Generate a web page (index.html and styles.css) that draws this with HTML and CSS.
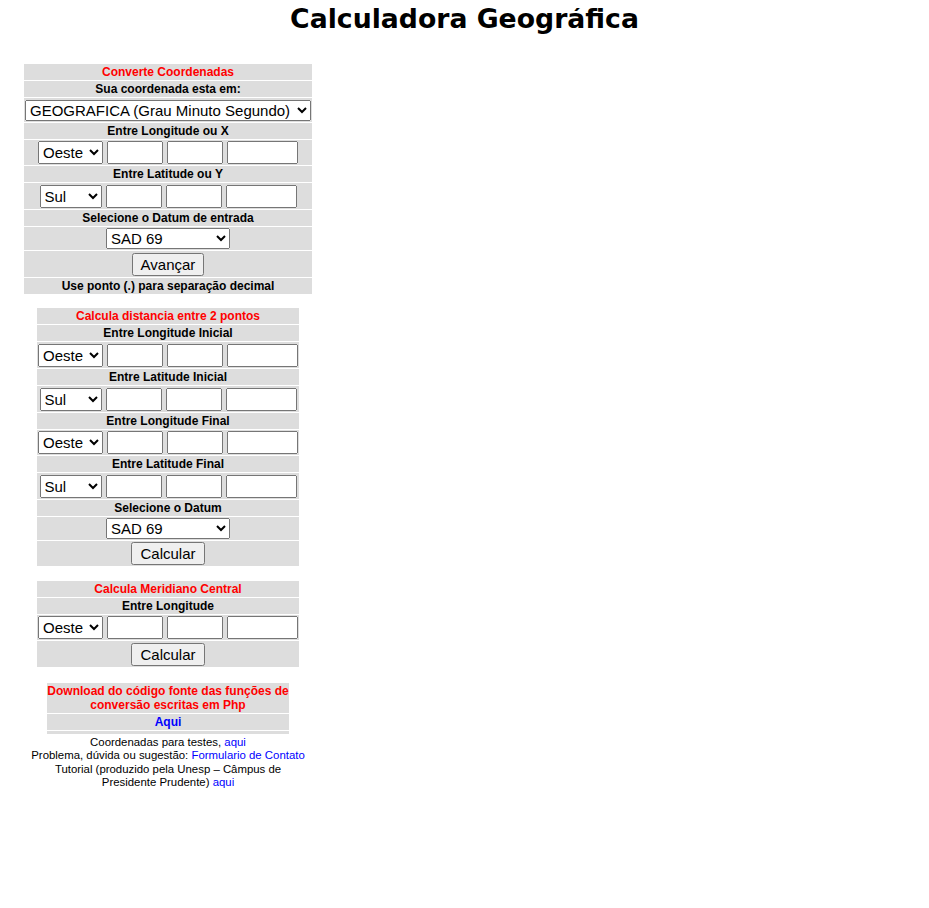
FILE: index.html
```html
<!DOCTYPE html>
<html lang="pt-BR">
<head>
<meta charset="utf-8">
<title>Calculadora Geográfica</title>
<link rel="stylesheet" href="styles.css">
</head>
<body>
<h1 class="title">Calculadora Geográfica</h1>
<div class="column">
  <form class="panel panel-wide">
    <div class="cell head">Converte Coordenadas</div>
    <div class="cell label">Sua coordenada esta em:</div>
    <div class="cell row row-select-tall">
      <select class="sel-system"><option>GEOGRAFICA (Grau Minuto Segundo)</option><option>UTM</option></select>
    </div>
    <div class="cell label">Entre Longitude ou X</div>
    <div class="cell row">
      <select class="sel-dir sel-ew"><option>Oeste</option><option>Leste</option></select>
      <input class="in-a" type="text"><input class="in-b" type="text"><input class="in-c" type="text">
    </div>
    <div class="cell label">Entre Latitude ou Y</div>
    <div class="cell row row-tall">
      <select class="sel-dir sel-ns"><option>Sul</option><option>Norte</option></select>
      <input class="in-a" type="text"><input class="in-b" type="text"><input class="in-c" type="text">
    </div>
    <div class="cell label">Selecione o Datum de entrada</div>
    <div class="cell row row-select">
      <select class="sel-datum"><option>SAD 69</option><option>WGS 84</option><option>Córrego Alegre</option></select>
    </div>
    <div class="cell row row-tall"><button type="button" class="btn">Avançar</button></div>
    <div class="cell label">Use ponto (.) para separação decimal</div>
  </form>

  <form class="panel panel-mid panel-dist">
    <div class="cell head">Calcula distancia entre 2 pontos</div>
    <div class="cell label">Entre Longitude Inicial</div>
    <div class="cell row row-tall">
      <select class="sel-dir sel-ew"><option>Oeste</option><option>Leste</option></select>
      <input class="in-a" type="text"><input class="in-b" type="text"><input class="in-c" type="text">
    </div>
    <div class="cell label">Entre Latitude Inicial</div>
    <div class="cell row row-tall">
      <select class="sel-dir sel-ns"><option>Sul</option><option>Norte</option></select>
      <input class="in-a" type="text"><input class="in-b" type="text"><input class="in-c" type="text">
    </div>
    <div class="cell label">Entre Longitude Final</div>
    <div class="cell row">
      <select class="sel-dir sel-ew"><option>Oeste</option><option>Leste</option></select>
      <input class="in-a" type="text"><input class="in-b" type="text"><input class="in-c" type="text">
    </div>
    <div class="cell label">Entre Latitude Final</div>
    <div class="cell row row-tall">
      <select class="sel-dir sel-ns"><option>Sul</option><option>Norte</option></select>
      <input class="in-a" type="text"><input class="in-b" type="text"><input class="in-c" type="text">
    </div>
    <div class="cell label">Selecione o Datum</div>
    <div class="cell row row-select">
      <select class="sel-datum"><option>SAD 69</option><option>WGS 84</option><option>Córrego Alegre</option></select>
    </div>
    <div class="cell row"><button type="button" class="btn">Calcular</button></div>
  </form>

  <form class="panel panel-mid panel-meridian">
    <div class="cell head">Calcula Meridiano Central</div>
    <div class="cell label">Entre Longitude</div>
    <div class="cell row">
      <select class="sel-dir sel-ew"><option>Oeste</option><option>Leste</option></select>
      <input class="in-a" type="text"><input class="in-b" type="text"><input class="in-c" type="text">
    </div>
    <div class="cell row row-tall"><button type="button" class="btn">Calcular</button></div>
  </form>

  <div class="panel panel-narrow">
    <div class="cell head">Download do código fonte das funções de<br>conversão escritas em Php</div>
    <div class="cell label"><a class="link" href="#">Aqui</a></div>
    <div class="cell spacer"></div>
  </div>

  <p class="footer">
    Coordenadas para testes, <a class="link" href="#">aqui</a><br>
    Problema, dúvida ou sugestão: <a class="link" href="#">Formulario de Contato</a><br>
    Tutorial (produzido pela Unesp – Câmpus de<br>
    Presidente Prudente) <a class="link" href="#">aqui</a>
  </p>
</div>
</body>
</html>
```

FILE: styles.css
```css
html {
  background: #fff;
}

body {
  margin: 8px;
  font-family: "Liberation Sans", Arial, sans-serif;
  color: #000;
}

.title {
  margin: 0;
  text-align: center;
  font-family: "DejaVu Sans", Verdana, sans-serif;
  font-weight: bold;
  font-size: 26.7px;
  line-height: 22px;
}

.column {
  width: 320px;
  display: flex;
  flex-direction: column;
  align-items: center;
}

.panel {
  display: flex;
  flex-direction: column;
  gap: 1px;
  padding: 1px;
  margin: 0;
  background: #fff;
}

.panel-wide {
  width: 288px;
  margin-top: 33px;
}

.panel-mid {
  width: 262px;
}

.panel-dist {
  margin-top: 12px;
}

.panel-meridian {
  margin-top: 13px;
}

.panel-narrow {
  width: 242px;
  margin-top: 14px;
}

.cell {
  background: #ddd;
  text-align: center;
  padding: 1px 0;
  font-size: 12px;
  font-weight: bold;
  line-height: 14px;
}

.head {
  color: #f00;
}

.row {
  display: flex;
  justify-content: center;
  align-items: center;
  gap: 4px;
  height: 23px;
}

.row-tall {
  height: 24px;
}

.row-select {
  height: 21px;
}

.row-select-tall {
  height: 22px;
}

.spacer {
  height: 1px;
}

select,
input,
button {
  font-family: "Liberation Sans", Arial, sans-serif;
  font-size: 15px;
  margin: 0;
}

.sel-system {
  width: 286px;
  height: 21px;
}

.sel-datum {
  width: 124px;
  height: 21px;
}

.sel-dir {
  height: 23px;
}

.sel-ew {
  width: 65px;
}

.sel-ns {
  width: 62px;
}

input {
  box-sizing: border-box;
  height: 23px;
}

.in-a,
.in-b {
  width: 56px;
}

.in-c {
  width: 71px;
}

.btn {
  height: 23px;
  padding: 0 7px;
}

.link {
  color: #00f;
  text-decoration: none;
}

.footer {
  margin: 1px 0 0;
  width: 300px;
  text-align: center;
  font-size: 11.4px;
  line-height: 13.3px;
  font-weight: normal;
}
```
